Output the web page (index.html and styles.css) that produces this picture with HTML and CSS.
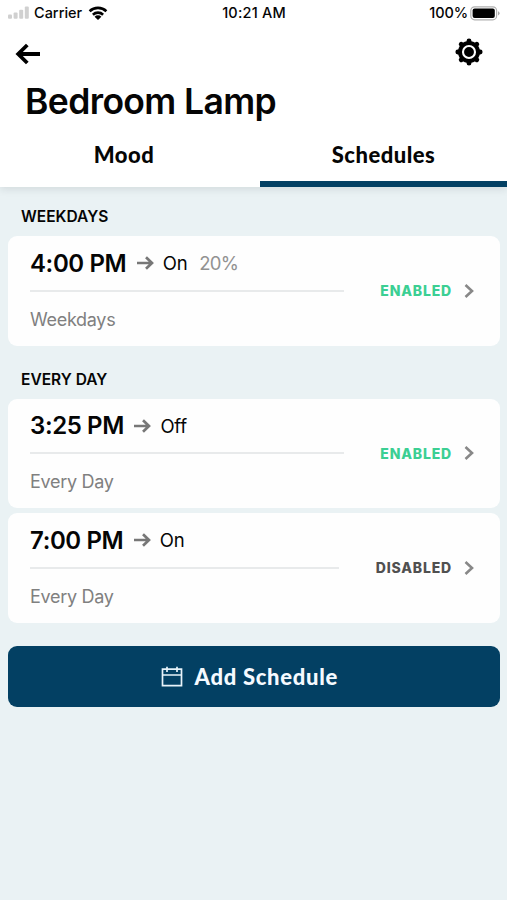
FILE: index.html
```html
<!DOCTYPE html>
<html lang="en">
<head>
<meta charset="utf-8">
<title>Bedroom Lamp</title>
<link rel="stylesheet" href="styles.css">
</head>
<body>
<header class="header">
  <div class="status">
    <div class="status-left">
      <svg width="21" height="14" viewBox="0 0 21 14" fill="#d0d0d0"><rect x="0" y="8.5" width="4" height="4.3" rx="1"/><rect x="5.6" y="6.5" width="4" height="6.3" rx="1"/><rect x="11.2" y="3.8" width="4" height="9" rx="1"/><rect x="16.8" y="0.6" width="4" height="12.2" rx="1"/></svg>
      <span class="carrier">Carrier</span>
      <svg class="wifi" width="20" height="14" viewBox="0 0 20 14" fill="none" stroke="#000" stroke-width="2.6"><path d="M1.6 5.2a12.2 12.2 0 0 1 16.8 0M4.9 8.7a7.4 7.4 0 0 1 10.2 0"/><path d="M10 13.9 6.6 10.7a4.8 4.8 0 0 1 6.8 0z" fill="#000" stroke="none"/></svg>
    </div>
    <span class="clock">10:21 AM</span>
    <div class="status-right">
      <span class="percent">100%</span>
      <svg width="30" height="15" viewBox="0 0 30 15"><rect x=".8" y=".8" width="25.8" height="13" rx="3.8" fill="#fff" stroke="#b0b0b0" stroke-width="1.2"/><rect x="2.6" y="2.6" width="22.2" height="9.4" rx="2" fill="#000"/><path d="M28 5.2q1.6.5 1.6 2.1T28 9.4z" fill="#aaa"/></svg>
    </div>
  </div>
  <nav class="toolbar">
    <svg class="back" width="26" height="22" viewBox="0 0 26 22" fill="none" stroke="#000" stroke-width="3.8"><path d="M25 11H3M12.3 2 3.2 11l9.1 9"/></svg>
    <svg width="28" height="28" viewBox="-14 -14 28 28"><path d="M0-11.2V11.2M-11.2 0H11.2M-7.8-7.8 7.8 7.8M7.8-7.8-7.8 7.8" fill="none" stroke="#000" stroke-width="4.8" stroke-linecap="round"/><circle r="11"/><circle r="6" fill="none" stroke="#fff" stroke-width="2.1"/></svg>
  </nav>
  <h1 class="title">Bedroom Lamp</h1>
  <div class="tabs">
    <div class="tab"><span class="mood">Mood</span></div>
    <div class="tab active"><span class="schedules">Schedules</span></div>
  </div>
</header>
<main class="content">
  <h2 class="group">WEEKDAYS</h2>
  <section class="card">
    <div class="details">
      <div class="event"><span class="time">4:00 PM</span><svg class="arrow" width="17" height="14" viewBox="0 0 17 14"><path d="M0 7H15M9 1.2l6 5.8-6 5.8"/></svg><span class="action">On</span><span class="level">20%</span></div>
      <div class="repeat">Weekdays</div>
    </div>
    <span class="state enabled">ENABLED</span>
    <svg class="chevron" width="10" height="14" viewBox="0 0 10 14"><path d="M1.5 1 8 7l-6.5 6"/></svg>
  </section>
  <h2 class="group second">EVERY DAY</h2>
  <section class="card">
    <div class="details">
      <div class="event"><span class="time">3:25 PM</span><svg class="arrow" width="17" height="14" viewBox="0 0 17 14"><path d="M0 7H15M9 1.2l6 5.8-6 5.8"/></svg><span class="action">Off</span></div>
      <div class="repeat">Every Day</div>
    </div>
    <span class="state enabled">ENABLED</span>
    <svg class="chevron" width="10" height="14" viewBox="0 0 10 14"><path d="M1.5 1 8 7l-6.5 6"/></svg>
  </section>
  <section class="card">
    <div class="details">
      <div class="event"><span class="time">7:00 PM</span><svg class="arrow" width="17" height="14" viewBox="0 0 17 14"><path d="M0 7H15M9 1.2l6 5.8-6 5.8"/></svg><span class="action">On</span></div>
      <div class="repeat">Every Day</div>
    </div>
    <span class="state">DISABLED</span>
    <svg class="chevron" width="10" height="14" viewBox="0 0 10 14"><path d="M1.5 1 8 7l-6.5 6"/></svg>
  </section>
  <button class="add">
    <svg width="22" height="22" viewBox="0 0 22 22" fill="none" stroke="#e8f3fa" stroke-width="1.7"><path d="M1.5 3.2H20.5V19.7H1.5zM1.5 9H20.5M6 .7V6M16 .7V6"/></svg>
    <span>Add Schedule</span>
  </button>
</main>
</body>
</html>
```

FILE: styles.css
```css
* { box-sizing: border-box; }
body {
  margin: 0;
  min-height: 900px;
  background: #eaf2f4;
  color: #050505;
  font-family: Inter, "Liberation Sans", sans-serif;
}
svg { display: block; flex: none; }
.header {
  height: 187px;
  background: #fff;
  box-shadow: 0 2px 8px rgba(30, 45, 50, .12);
}
.status {
  display: grid;
  grid-template-columns: 1fr auto 1fr;
  align-items: center;
  height: 26px;
  padding: 0 7px 0 8px;
  font-size: 14.5px;
  font-weight: 500;
  line-height: 18px;
}
.clock { letter-spacing: .2px; }
.status-left, .status-right { display: flex; align-items: center; }
.status-right { justify-content: flex-end; gap: 2px; }
.carrier { margin: 0 6px 0 5px; }
.percent { letter-spacing: -.1px; }
.toolbar {
  display: flex;
  justify-content: space-between;
  align-items: center;
  height: 54px;
  padding: 0 24px 2px 15px;
}
.back { margin-top: 3px; }
.title {
  margin: 0 0 0 25px;
  font-size: 35.5px;
  font-weight: 600;
  line-height: 44px;
  letter-spacing: -.62px;
  white-space: nowrap;
}
.tabs {
  display: grid;
  grid-template-columns: 260px 1fr;
  height: 63px;
}
.tab {
  display: flex;
  justify-content: center;
  padding: 18px 12px 0 0;
  border-bottom: 6px solid transparent;
  font: 900 22px/26px Lato, sans-serif;
  letter-spacing: .5px;
}
.tab.active { border-color: #034063; padding-right: 0; }
.content { padding: 20px 7.5px 0 8px; }
.group {
  margin: 0 0 10px 13px;
  font-size: 15.5px;
  font-weight: 600;
  line-height: 19px;
}
.group.second { margin-top: 24px; }
.card {
  display: flex;
  align-items: center;
  height: 109.5px;
  padding: 0 26px 0 22px;
  border-radius: 9px;
  background: #fefefe;
}
.card + .card { margin-top: 5px; }
.details { flex: 1; margin-right: 36.5px; }
.event {
  display: flex;
  align-items: center;
  height: 56px;
  padding-top: 1px;
  border-bottom: 2px solid #e8eaeb;
}
.time { font-size: 24px; font-weight: 600; letter-spacing: -.38px; }
.arrow { margin: 0 9px 0 10.5px; }
.arrow path { fill: none; stroke: #777; stroke-width: 2.7; }
.action { font-size: 18.5px; letter-spacing: -.3px; }
.level { margin-left: 12px; color: #929292; font-size: 18.5px; letter-spacing: -.8px; }
.repeat { height: 54px; line-height: 56px; color: #808080; font-size: 18px; letter-spacing: -.3px; }
.state {
  color: #505050;
  font-size: 14px;
  font-weight: 800;
  letter-spacing: .82px;
}
.enabled { color: #3bcf93; }
.chevron { margin-left: 11.5px; }
.chevron path { fill: none; stroke: #888; stroke-width: 2.6; }
.add {
  display: flex;
  justify-content: center;
  align-items: center;
  gap: 12px;
  width: 100%;
  height: 61px;
  margin-top: 23.5px;
  padding: 0 9px 0 0;
  border: 0;
  border-radius: 9px;
  background: #034063;
  color: #f5faff;
  font: 900 22px/26px Lato, sans-serif;
  letter-spacing: .7px;
}
```
